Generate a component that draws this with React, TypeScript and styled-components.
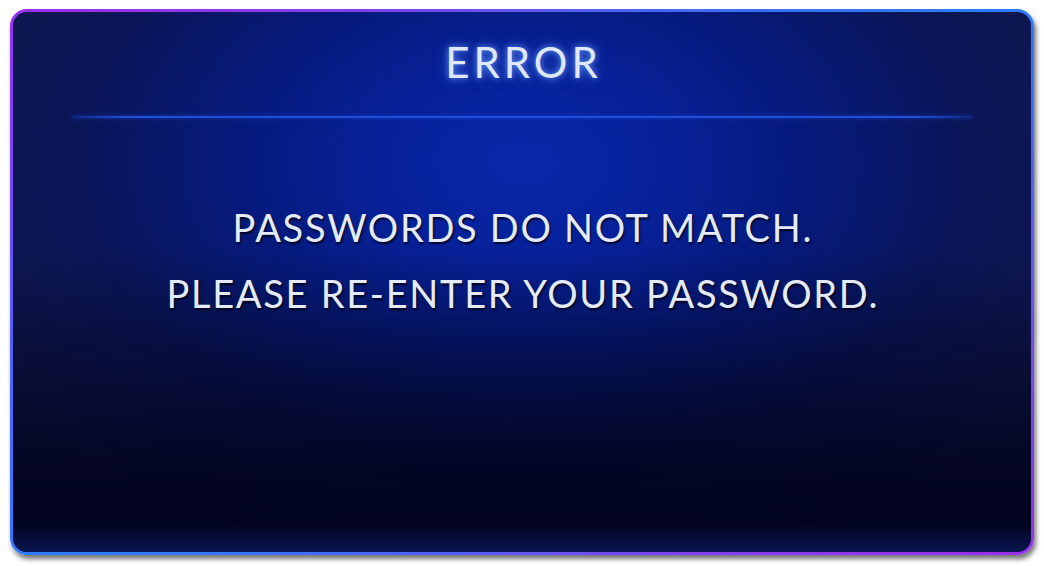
import React from "react";
import styled, { createGlobalStyle } from "styled-components";

const Global = createGlobalStyle`
  html, body { margin: 0; padding: 0; background: #ffffff; }
  body { font-family: "Lato", "Liberation Sans", sans-serif; }
`;

const Page = styled.div`
  width: 1044px;
  height: 566px;
  box-sizing: border-box;
  padding: 9px 10px 11px 10px;
  background: #ffffff;
`;

const Panel = styled.div`
  width: 1024px;
  height: 546px;
  box-sizing: border-box;
  border: 3px solid transparent;
  border-radius: 17px;
  background:
    linear-gradient(180deg, rgba(0, 0, 0, 0) 95%, rgba(30, 60, 200, 0.3) 100%) padding-box,
    linear-gradient(180deg, rgba(0, 0, 0, 0) 44%, rgba(0, 2, 25, 0.8) 84%, rgba(0, 2, 25, 0.9) 100%) padding-box,
    radial-gradient(ellipse 62% 78% at 50% 28%, #0827a8 0%, #07219a 22%, #061a7c 45%, #0a1558 70%, #12184a 100%) padding-box,
    conic-gradient(from -60deg, #9a30f0 0deg, #2b7dff 120deg, #9a30f0 180deg, #2b7dff 300deg, #9a30f0 360deg) border-box;
  box-shadow: 2px 4px 5px rgba(0, 0, 0, 0.55);
  display: flex;
  flex-direction: column;
  align-items: center;
`;

const Title = styled.h1`
  margin: 22px 0 0 0;
  padding-left: 3px;
  font-family: "Lato", "Liberation Sans", sans-serif;
  font-weight: 400;
  font-size: 42px;
  line-height: 56px;
  letter-spacing: 4px;
  color: #dfe8fb;
  text-shadow: 0 0 6px rgba(110, 160, 255, 0.9), 0 0 14px rgba(80, 130, 255, 0.6);
`;

const Divider = styled.div`
  width: 900px;
  height: 2px;
  margin-top: 26px;
  background: linear-gradient(90deg, rgba(30, 80, 220, 0.3) 0%, #1f4fd6 6%, #1f4fd6 94%, rgba(30, 80, 220, 0.3) 100%);
  box-shadow: 0 0 4px rgba(40, 90, 240, 0.6);
`;

const Message = styled.div`
  margin-top: 81px;
  display: flex;
  flex-direction: column;
  align-items: center;
  gap: 10px;
`;

const Line = styled.p`
  margin: 0;
  padding-left: 1.7px;
  font-family: "Lato", "Liberation Sans", sans-serif;
  font-weight: 400;
  font-size: 38px;
  line-height: 56px;
  letter-spacing: 1.7px;
  color: #e4eaf6;
  text-shadow: 1px 2px 2px rgba(0, 0, 20, 0.85);
`;

export default function App() {
  return (
    <>
      <Global />
      <Page>
        <Panel>
          <Title>ERROR</Title>
          <Divider />
          <Message>
            <Line>PASSWORDS DO NOT MATCH.</Line>
            <Line>PLEASE RE-ENTER YOUR PASSWORD.</Line>
          </Message>
        </Panel>
      </Page>
    </>
  );
}
